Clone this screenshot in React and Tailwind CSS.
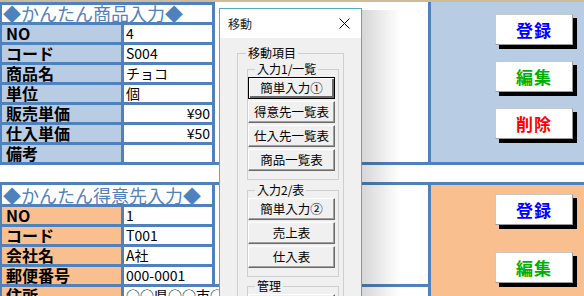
import clsx from 'clsx';

const PRODUCT_ROWS = [
  { label: 'NO', value: '4' },
  { label: 'コード', value: 'S004' },
  { label: '商品名', value: 'チョコ' },
  { label: '単位', value: '個' },
  { label: '販売単価', value: '¥90', right: true },
  { label: '仕入単価', value: '¥50', right: true },
  { label: '備考', value: '' },
];

const CUSTOMER_ROWS = [
  { label: 'NO', value: '1' },
  { label: 'コード', value: 'T001' },
  { label: '会社名', value: 'A社' },
  { label: '郵便番号', value: '000-0001' },
];

export default function App() {
  return (
    <div className="relative w-[584px] h-[296px] overflow-hidden bg-white text-black font-['Noto_Sans_CJK_JP','Noto_Sans',sans-serif]">
      <div className="h-[2px] bg-[#cbbd9c]" />

      {/* 商品入力 */}
      <div className="flex h-[160px]">
        <div className="w-[215px] border-l-2 border-r-[3px] border-[#4f81bd]">
          <TitleRow className="h-[20px] border-t-[3px] items-center">◆かんたん商品入力◆</TitleRow>
          {PRODUCT_ROWS.map((r) => (
            <FieldRow key={r.label} {...r} tone="bg-[#b8cce4]" />
          ))}
        </div>
        <div className="w-[213px] bg-white" />
        <div className="w-[3px] bg-[#4f81bd]" />
        <div className="flex-1 flex flex-col gap-[16px] pt-[12px] bg-[#b8cce4]">
          <SheetButton color="text-[#0000ff]">登録</SheetButton>
          <SheetButton color="text-[#00b000]">編集</SheetButton>
          <SheetButton color="text-[#ff0000]">削除</SheetButton>
        </div>
      </div>

      <div className="h-[3px] bg-[#4f81bd]" />
      <div className="h-[17px]" />
      <div className="h-[3px] bg-[#4f81bd]" />

      {/* 得意先入力 */}
      <div className="flex h-[111px]">
        <div className="w-[428px] flex flex-col">
          <div className="flex">
            <div className="w-[215px] border-l-2 border-r-[3px] border-[#4f81bd]">
              <TitleRow className="h-[19px] items-end">◆かんたん得意先入力◆</TitleRow>
              {CUSTOMER_ROWS.map((r) => (
                <FieldRow key={r.label} {...r} tone="bg-[#fabf8f]" />
              ))}
            </div>
            <div className="flex-1 bg-white" />
          </div>
          <div className="flex h-[20px] border-l-2 border-t-[3px] border-[#4f81bd]">
            <div className="w-[119px] pl-[4px] text-[16px] font-bold leading-[17px] bg-[#fabf8f]">住所</div>
            <div className="flex-1 border-l-[3px] border-[#4f81bd] bg-white pl-[2px] text-[14px] leading-[17px] whitespace-nowrap">
              ○○県○○市○○町1-1
            </div>
          </div>
        </div>
        <div className="w-[3px] bg-[#4f81bd]" />
        <div className="flex-1 flex flex-col gap-[27px] pt-[9px] bg-[#fabf8f]">
          <SheetButton color="text-[#0000ff]">登録</SheetButton>
          <SheetButton color="text-[#00b000]">編集</SheetButton>
        </div>
      </div>

      <MoveDialog />
    </div>
  );
}

function TitleRow({ className, children }) {
  return (
    <div className={clsx('flex bg-white border-[#4f81bd] pl-[1px] text-[18px] leading-[17px] text-[#4f81bd] whitespace-nowrap', className)}>
      {children}
    </div>
  );
}

function FieldRow({ label, value, right, tone }) {
  return (
    <div className="flex h-[20px] border-t-[3px] border-[#4f81bd]">
      <div className={clsx('w-[119px] pl-[4px] text-[16px] font-bold leading-[17px] whitespace-nowrap', tone)}>{label}</div>
      <div className={clsx('flex-1 border-l-[3px] border-[#4f81bd] bg-white px-[2px] text-[14px] leading-[17px]', right && 'text-right')}>
        {value}
      </div>
    </div>
  );
}

function SheetButton({ color, children }) {
  return (
    <button className={clsx('ml-[64px] w-[78px] h-[31px] shrink-0 bg-white border border-[#c8c8c8] border-r-[#9a9a9a] border-b-[#9a9a9a] shadow-[4px_4px_0_#000] text-[17px] font-bold leading-none tracking-[1px]', color)}>
      {children}
    </button>
  );
}

// ===================================
// 移動 dialog (VBA UserForm)
// ===================================
function MoveDialog() {
  return (
    <>
      <div className="absolute left-[362px] top-[10px] w-[38px] h-[290px] bg-linear-to-r from-black/[0.16] to-transparent" />
      <div className="absolute left-[219px] top-[8px] w-[143px] h-[300px] border border-[#5aa9bf] bg-[#f0f0f0]">
        <div className="h-[29px] flex items-center justify-between bg-white pl-[8px] pr-[11px]">
          <span className="text-[12px] leading-none text-[#222]">移動</span>
          <svg width="11" height="11" viewBox="0 0 11 11">
            <path d="M0.5 0.5L10.5 10.5M10.5 0.5L0.5 10.5" stroke="#000" strokeWidth="1" fill="none" />
          </svg>
        </div>
        <div className="pt-[7px]">
          <fieldset className="ml-[17px] w-[107px] min-w-0 border border-[#cfcfcf] pb-[10px]">
            <legend className="ml-[8px] px-[2px] text-[12px] leading-[16px]">移動項目</legend>
            <Group label="入力1/一覧" items={['簡単入力①', '得意先一覧表', '仕入先一覧表', '商品一覧表']} focus />
            <Group label="入力2/表" items={['簡単入力②', '売上表', '仕入表']} className="mt-[2px]" />
            <Group label="管理" items={['シート一覧']} className="mt-[1px]" />
          </fieldset>
        </div>
      </div>
    </>
  );
}

function Group({ label, items, focus, className }) {
  return (
    <fieldset className={clsx('ml-[9px] w-[92px] min-w-0 border border-[#cfcfcf] pb-[8px]', className)}>
      <legend className="ml-[7px] px-[2px] text-[12px] leading-[16px]">{label}</legend>
      <div className="flex flex-col gap-[2px]">
        {items.map((t, i) => (
          <DialogButton key={t} focused={focus && i === 0}>{t}</DialogButton>
        ))}
      </div>
    </fieldset>
  );
}

function DialogButton({ focused, children }) {
  return (
    <button
      className={clsx(
        'w-[87px] h-[22px] bg-[#f0f0f0] text-[12.5px] leading-none text-black border',
        focused
          ? 'border-black shadow-[inset_1px_1px_0_#fff,inset_-2px_-2px_0_#696969]'
          : 'border-t-white border-l-white border-r-[#696969] border-b-[#696969] shadow-[inset_-1px_-1px_0_#a0a0a0]',
      )}
    >
      {children}
    </button>
  );
}
